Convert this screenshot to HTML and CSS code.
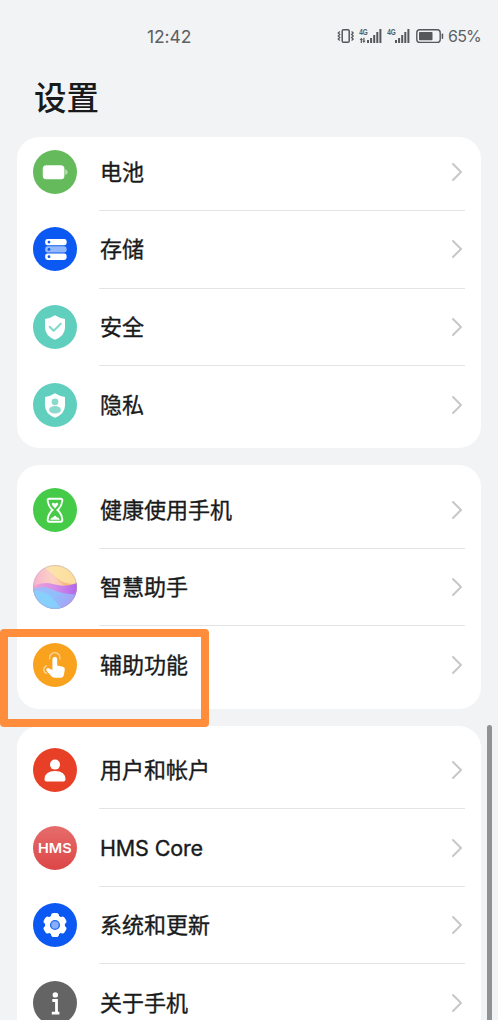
FILE: index.html
```html
<!DOCTYPE html>
<html lang="zh-CN">
<head>
<meta charset="utf-8">
<title>设置</title>
<link rel="stylesheet" href="styles.css">
</head>
<body>
<svg width="0" height="0" class="defs">
  <defs>
    <symbol id="chev" viewBox="0 0 12 20"><path d="M2 2l8 8-8 8" fill="none" stroke="#c6c7c9" stroke-width="2" stroke-linecap="round" stroke-linejoin="round"/></symbol>
    <linearGradient id="hms" x1="0" y1="0" x2="0" y2="1"><stop offset="0" stop-color="#e66c6c"/><stop offset="1" stop-color="#dc4646"/></linearGradient>
    <linearGradient id="top" x1="0" y1=".5" x2="1" y2=".4"><stop offset="0" stop-color="#f7b3cf"/><stop offset=".45" stop-color="#fbd0c4"/><stop offset="1" stop-color="#f8b777"/></linearGradient>
    <linearGradient id="band" x1="0" y1="0" x2="1" y2="0"><stop offset="0" stop-color="#f3a3cf"/><stop offset=".5" stop-color="#d58ce8"/><stop offset="1" stop-color="#b167ea"/></linearGradient>
    <linearGradient id="sea" x1="0" y1="0" x2="1" y2=".3"><stop offset="0" stop-color="#a9b6fa"/><stop offset=".5" stop-color="#8fc0fb"/><stop offset="1" stop-color="#a7a2f6"/></linearGradient>
    <clipPath id="ball"><circle cx="22" cy="22" r="22"/></clipPath>
  </defs>
</svg>
<div class="screen">
  <header class="status">
    <span class="time">12:42</span>
    <div class="tray">
      <svg class="signals" width="107" height="18" viewBox="0 0 107 18">
        <g fill="none" stroke="#55575a" stroke-width="1.5">
          <rect x="5.2" y="2.7" width="7" height="12.6" rx="1.3"/>
          <path d="M2.8 4.5L1.2 6l1.6 1.5L1.2 9l1.6 1.5L1.2 12l1.6 1.5M14.6 4.5L16.2 6l-1.6 1.5L16.2 9l-1.6 1.5 1.6 1.5-1.6 1.5" stroke-width="1.2"/>
          <rect x="79.8" y="2.8" width="23.4" height="12.6" rx="3" stroke-width="1.4"/>
        </g>
        <g fill="#55575a">
          <rect x="82" y="5" width="13.5" height="8.2" rx=".8"/><rect x="104.7" y="6.5" width="1.5" height="5.4" rx=".7"/>
          <path d="M30 13h2v3h-2zM33.1 11h2v5h-2zM36.2 8h2v8h-2zM39.3 5h2v11h-2zM42.4 2h2v14h-2zM58 13h2v3h-2zM61.1 11h2v5h-2zM64.2 8h2v8h-2zM67.3 5h2v11h-2zM70.4 2h2v14h-2z"/>
          <path d="M22.6 13l1.7-2.2L26 13h-1.1v3h-1.2v-3zM25.2 13.8l1.7 2.2 1.7-2.2h-1.1v-3h-1.2v3z"/>
          <text x="22.2" y="8.4" textLength="8.6" lengthAdjust="spacingAndGlyphs" class="net">4G</text><text x="50.2" y="8.4" textLength="8.6" lengthAdjust="spacingAndGlyphs" class="net">4G</text>
        </g>
      </svg>
      <span class="percent">65%</span>
    </div>
  </header>
  <h1 class="title">设置</h1>
  <main class="list">
    <section class="card first">
      <div class="row">
        <svg class="icon" viewBox="0 0 44 44"><circle cx="22" cy="22" r="22" fill="#65bb5c"/><rect x="9.8" y="15.2" width="21.6" height="14" rx="3.5" fill="#fff"/><path d="M32.2 19.3q2.4.3 2.4 2.9t-2.4 2.9z" fill="#b6dfb2"/></svg>
        <span class="label">电池</span><svg class="chev"><use href="#chev"/></svg>
      </div>
      <div class="row">
        <svg class="icon" viewBox="0 0 44 44"><circle cx="22" cy="22" r="22" fill="#0b59f2"/><rect x="12.2" y="11.9" width="21.4" height="6.4" rx="2.4" fill="#fff"/><rect x="12.2" y="19.2" width="21.4" height="6.4" rx="2.4" fill="#93b8fa"/><rect x="12.2" y="26.5" width="21.4" height="6.4" rx="2.4" fill="#fff"/><g fill="#0b59f2"><circle cx="16" cy="15.1" r="1.4"/><circle cx="16" cy="22.4" r="1.4"/><circle cx="16" cy="29.7" r="1.4"/></g></svg>
        <span class="label">存储</span><svg class="chev"><use href="#chev"/></svg>
      </div>
      <div class="row">
        <svg class="icon" viewBox="0 0 44 44"><circle cx="22" cy="22" r="22" fill="#61cfbe"/><path d="M22 10.2q5 3.2 10 3.7v8.6q0 8.4-10 12.2-10-3.8-10-12.2v-8.6q5-.5 10-3.7z" fill="#fff"/><path d="M16.7 21.8l4 4 7.1-7.1" fill="none" stroke="#7fd8ca" stroke-width="2" stroke-linecap="round" stroke-linejoin="round"/></svg>
        <span class="label">安全</span><svg class="chev"><use href="#chev"/></svg>
      </div>
      <div class="row">
        <svg class="icon" viewBox="0 0 44 44"><circle cx="22" cy="22" r="22" fill="#61cfbe"/><path d="M22 10.2q5 3.2 10 3.7v8.6q0 8.4-10 12.2-10-3.8-10-12.2v-8.6q5-.5 10-3.7z" fill="#fff"/><circle cx="22" cy="18.8" r="3.4" fill="#8bdacd"/><ellipse cx="22" cy="26.8" rx="6" ry="3.7" fill="#8bdacd"/></svg>
        <span class="label">隐私</span><svg class="chev"><use href="#chev"/></svg>
      </div>
    </section>
    <section class="card">
      <div class="row">
        <svg class="icon" viewBox="0 0 44 44"><circle cx="22" cy="22" r="22" fill="#46cb49"/><path d="M16.3 10.8h11.4q2 0 1.6 2.2-.7 5.3-4.8 9 4.1 3.7 4.8 9.3.3 2.4-1.6 2.4H16.3q-1.9 0-1.6-2.4.7-5.6 4.8-9.3-4.1-3.7-4.8-9-.4-2.2 1.6-2.2z" fill="none" stroke="#fff" stroke-width="1.9"/><path d="M22 20.5l-3.1-3.7q-.5-1.9 1.3-2.1 1.1 0 1.8 1.1.7-1.1 1.8-1.1 1.8.2 1.3 2.1zM17.2 31.8q.4-2.2 2.9-2.5l1.9-1.8 1.9 1.8q2.5.3 2.9 2.5z" fill="#fff"/></svg>
        <span class="label">健康使用手机</span><svg class="chev"><use href="#chev"/></svg>
      </div>
      <div class="row">
        <svg class="icon" viewBox="0 0 44 44"><g clip-path="url(#ball)"><path fill="url(#top)" d="M0 0h44v44H0z"/><path d="M8 0q10 7 16 13t20 6V0z" fill="#fde7a2" opacity=".8"/><path d="M24 13q8 8 20 6v6q-12 0-20-12z" fill="#f9b26f" opacity=".6"/><path d="M0 21q11-5 20-2 12 4 24-1v26H0z" fill="url(#band)"/><path d="M0 24q9-4 18 0 12 6 26 5v15H0z" fill="url(#sea)"/><path d="M0 26q9-1 17 5 7 6 12 13H0z" fill="#7fdcfd" opacity=".6"/></g><circle cx="22" cy="22" r="21.5" fill="none" stroke="#a2a0ce" stroke-opacity=".4"/></svg>
        <span class="label">智慧助手</span><svg class="chev"><use href="#chev"/></svg>
      </div>
      <div class="row">
        <svg class="icon" viewBox="0 0 44 44"><circle cx="22" cy="22" r="22" fill="#f9a21d"/><path d="M19.4 16.3q0-2.5 2.4-2.5t2.4 2.5v6.2l5.6 1.2q2.4.6 2 3l-1 5.6q-.4 2.4-2.8 2.4h-6.4q-1.7 0-2.9-1.3l-5-5.5q-1.2-1.6.2-2.5 1.2-.7 2.8.3l2.7 1.4z" fill="#fff"/><path d="M16.7 15.8a5.2 5.2 0 1 1 10.2 0M13.5 22.8a4 4 0 0 0 .2 7.6" fill="none" stroke="#fcd59a" stroke-width="1.3" stroke-linecap="round"/></svg>
        <span class="label">辅助功能</span><svg class="chev"><use href="#chev"/></svg>
      </div>
      <div class="highlight"></div>
    </section>
    <section class="card">
      <div class="row">
        <svg class="icon" viewBox="0 0 44 44"><circle cx="22" cy="22" r="22" fill="#e84026"/><circle cx="22" cy="16.6" r="5" fill="#fff"/><path d="M11.5 31.5q0-8.5 10.5-8.5t10.5 8.5q0 2-2 2h-17q-2 0-2-2z" fill="#fff"/></svg>
        <span class="label">用户和帐户</span><svg class="chev"><use href="#chev"/></svg>
      </div>
      <div class="row">
        <svg class="icon" viewBox="0 0 44 44"><circle cx="22" cy="22" r="22" fill="url(#hms)"/><text x="5" y="27" textLength="33.6" lengthAdjust="spacingAndGlyphs" class="hms">HMS</text></svg>
        <span class="label latin">HMS Core</span><svg class="chev"><use href="#chev"/></svg>
      </div>
      <div class="row">
        <svg class="icon" viewBox="0 0 44 44"><circle cx="22" cy="22" r="22" fill="#0b59f2"/><g fill="#fff"><circle cx="22" cy="22" r="10"/><rect x="18" y="10" width="8" height="24" rx="2.8"/><rect x="18" y="10" width="8" height="24" rx="2.8" transform="rotate(60 22 22)"/><rect x="18" y="10" width="8" height="24" rx="2.8" transform="rotate(120 22 22)"/></g><circle cx="22" cy="22" r="4.4" fill="#86aef9" stroke="#2869f3" stroke-width="1.4"/></svg>
        <span class="label">系统和更新</span><svg class="chev"><use href="#chev"/></svg>
      </div>
      <div class="row">
        <svg class="icon" viewBox="0 0 44 44"><circle cx="22" cy="22" r="22" fill="#646464"/><circle cx="22.3" cy="13.9" r="2.7" fill="#fff"/><path d="M19.3 19.5h4.2v12.3M18.8 32.2h7.6" fill="none" stroke="#fff" stroke-width="2.8"/></svg>
        <span class="label">关于手机</span><svg class="chev"><use href="#chev"/></svg>
      </div>
    </section>
  </main>
  <div class="scrollbar"></div>
</div>
</body>
</html>
```

FILE: styles.css
```css
* { box-sizing: border-box; }
body { margin: 0; background: #f1f3f5; overflow: hidden; }
.defs { position: absolute; }
.screen {
  position: relative;
  width: 498px;
  height: 1020px;
  overflow: hidden;
  background: #f1f3f5;
  color: #191a1b;
  font-family: "Noto Sans CJK SC", sans-serif;
}
.status {
  display: flex;
  justify-content: space-between;
  align-items: center;
  height: 72px;
  padding: 0 17px 0 147px;
  color: #5d5f62;
  font-family: Inter, "Noto Sans CJK SC", sans-serif;
}
.time { padding-top: 1px; font-size: 17.5px; letter-spacing: -.1px; }
.tray { display: flex; align-items: center; gap: 4px; }
.signals { display: block; }
.net { font: bold 8.5px "Liberation Sans", sans-serif; }
.percent { font-size: 16px; letter-spacing: -.8px; }
.title {
  height: 65px;
  margin: 0;
  padding-left: 34px;
  font-size: 32.5px;
  font-weight: 500;
  line-height: 48px;
}
.list { display: flex; flex-direction: column; gap: 17px; padding: 0 17px; }
.card {
  position: relative;
  padding: 5.5px 16px 5px;
  border-radius: 22px;
  background: #fff;
}
.row {
  position: relative;
  display: flex;
  align-items: center;
  height: 77.6px;
}
.card.first { padding-top: 0; }
.card.first .row:first-child { height: 73.6px; padding-bottom: 4px; }
.row:not(:nth-last-child(1 of .row))::after {
  content: "";
  position: absolute;
  right: 0;
  bottom: -.4px;
  left: 66px;
  height: 1px;
  background: #e3e4e5;
}
.icon { flex: none; width: 44px; height: 44px; margin-right: 23px; }
.label {
  flex: 1;
  padding-bottom: 4px;
  font-size: 22px;
  font-weight: 400;
  line-height: 32px;
  -webkit-text-stroke: .35px #191a1b;
}
.latin {
  padding-bottom: 0;
  font-family: Inter, "Noto Sans CJK SC", sans-serif;
  font-size: 21.5px;
  letter-spacing: -.15px;
}
.hms { fill: #fff; font: 600 13px Inter, sans-serif; }
.chev { flex: none; width: 12px; height: 20px; margin-right: 2px; }
.highlight {
  position: absolute;
  top: 164px;
  left: -17px;
  width: 209px;
  height: 98px;
  border: 8px solid #ff8d3c;
  border-radius: 4px;
  z-index: 2;
}
.scrollbar {
  position: absolute;
  top: 725px;
  right: 6px;
  width: 5px;
  height: 310px;
  border-radius: 3px;
  background: #919293;
}
```
